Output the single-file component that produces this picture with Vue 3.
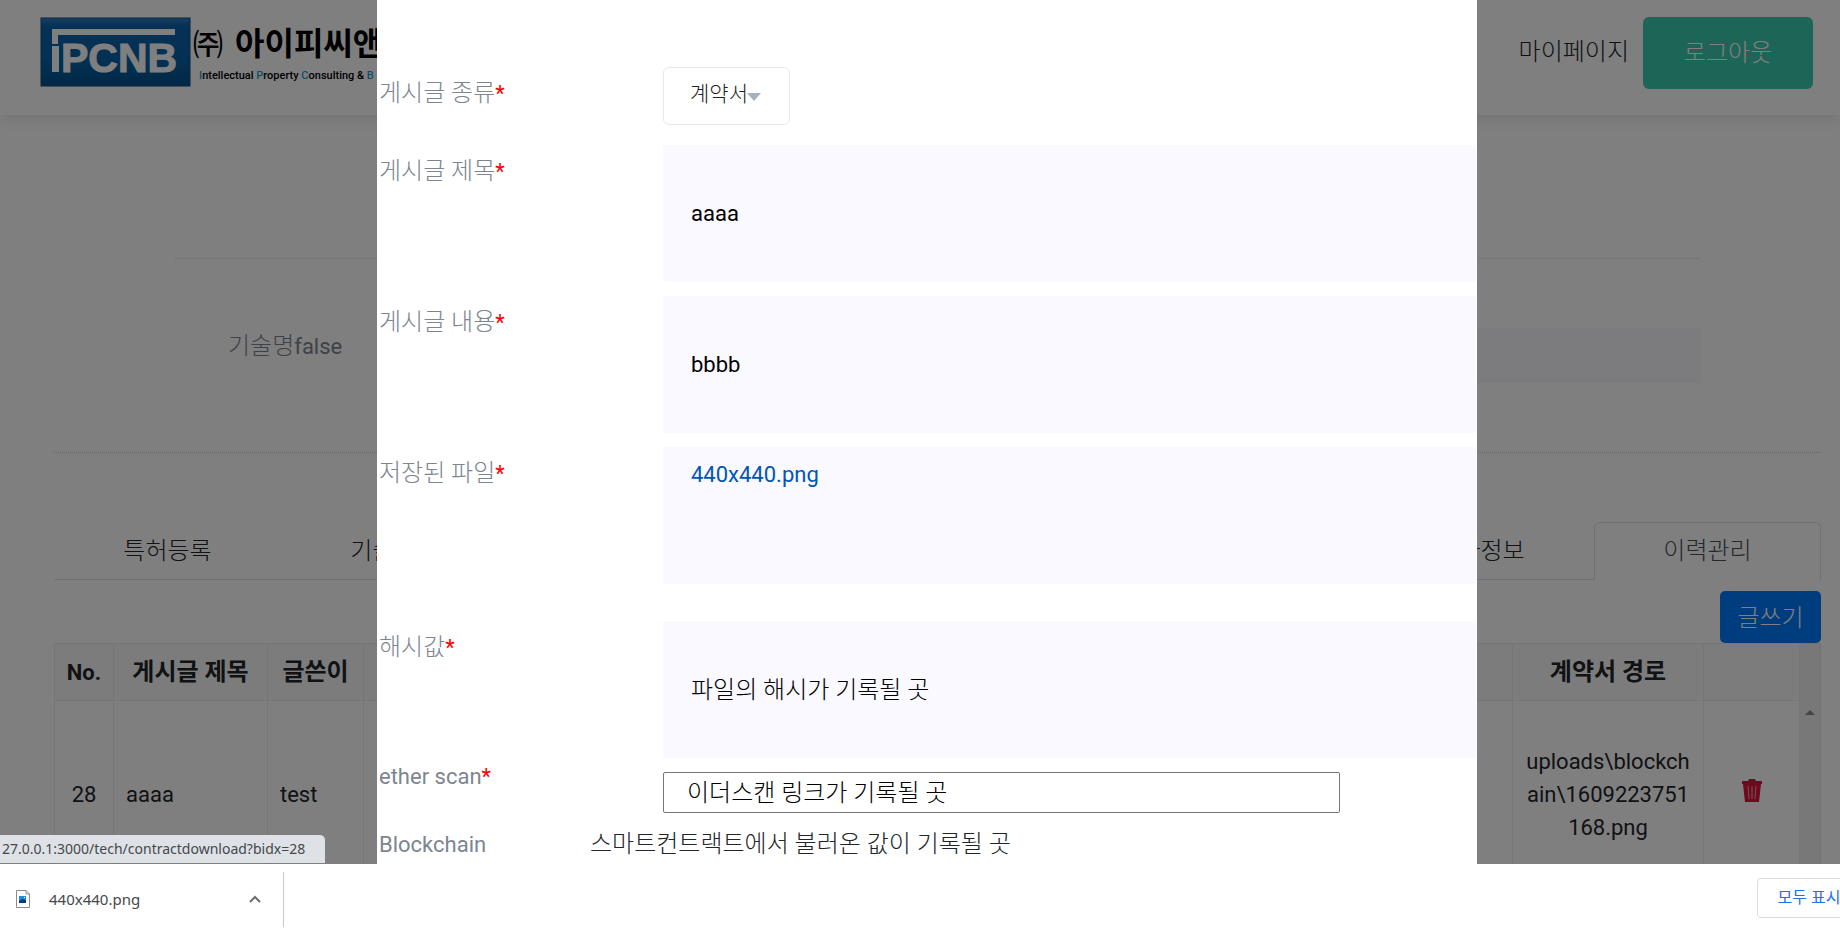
<template>
  <div class="window">
    <div class="viewport">
      <div class="page">
        <header class="header">
          <a class="logo" href="#">
            <svg width="152" height="71" viewBox="0 0 152 71" aria-hidden="true">
              <defs>
                <linearGradient id="logoBg" x1="0" y1="0" x2="0" y2="1">
                  <stop offset="0" stop-color="#2f7fc4" />
                  <stop offset="0.12" stop-color="#0a62ac" />
                  <stop offset="0.6" stop-color="#0663a8" />
                  <stop offset="1" stop-color="#04508c" />
                </linearGradient>
              </defs>
              <rect x="1" y="1" width="149" height="68" fill="url(#logoBg)" stroke="#0d4a80" />
              <path d="M12 12h123v6H18v9h-6z" fill="#fff" />
              <path d="M12 29h7v26h-7z" fill="#fff" />
              <text class="logo-mark" x="21" y="55">PCNB</text>
            </svg>
            <span class="logo-text">
              <span class="logo-name"><small>㈜</small>아이피씨앤</span>
              <span class="logo-sub"><i>I</i>ntellectual <i>P</i>roperty <i>C</i>onsulting &amp; <i>B</i></span>
            </span>
          </a>
          <nav class="user-nav">
            <a class="ko mypage" href="#">마이페이지</a>
            <button class="ko logout" type="button">로그아웃</button>
          </nav>
        </header>

        <main class="content">
          <section class="tech">
            <label for="tech-name"><span class="ko">기술명</span>false</label>
            <input id="tech-name" type="text" readonly>
          </section>

          <nav class="tabs">
            <a
              v-for="tab in tabs"
              :key="tab.name"
              href="#"
              :class="['ko', 'tab', tab.side, { active: tab.active }]"
            >{{ tab.name }}</a>
          </nav>

          <div class="toolbar">
            <button class="ko write" type="button">글쓰기</button>
          </div>

          <table class="history">
            <colgroup>
              <col class="c-no">
              <col class="c-title">
              <col class="c-writer">
              <col>
              <col class="c-path">
              <col class="c-del">
              <col class="c-scroll">
            </colgroup>
            <thead>
              <tr>
                <th>No.</th>
                <th class="ko">게시글 제목</th>
                <th class="ko">글쓴이</th>
                <th></th>
                <th class="ko">계약서 경로</th>
                <th></th>
                <th class="gutter"></th>
              </tr>
            </thead>
            <tbody>
              <tr v-for="row in rows" :key="row.no">
                <td class="center">{{ row.no }}</td>
                <td>{{ row.title }}</td>
                <td>{{ row.writer }}</td>
                <td></td>
                <td class="center path">{{ row.path }}</td>
                <td class="center">
                  <button class="trash" type="button" aria-label="삭제">
                    <svg width="20" height="23" viewBox="0 0 20 23">
                      <path d="M0 2h6l1-2h6l1 2h6v3H0z" fill="#dc143c" />
                      <path d="M1 5h18l-2 18H3z" fill="#dc143c" />
                      <path d="M6 7l1 13M10 7v13M14 7l-1 13" stroke="#fff" stroke-opacity="0.6" fill="none" />
                    </svg>
                  </button>
                </td>
                <td class="gutter">
                  <svg width="10" height="5" viewBox="0 0 10 5"><path d="M0 5l5-5 5 5z" fill="#8a8a8a" /></svg>
                </td>
              </tr>
            </tbody>
          </table>
        </main>
      </div>

      <div class="overlay">
        <form class="modal" @submit.prevent>
          <div class="row kind">
            <label for="kind"><span class="ko">게시글 종류</span><em>*</em></label>
            <div class="select">
              <select id="kind" v-model="kind">
                <option>계약서</option>
              </select>
              <svg class="caret" width="14" height="8" viewBox="0 0 14 8"><path d="M0 0h14L7 8z" fill="#a9b1bb" /></svg>
            </div>
          </div>
          <div class="row">
            <label for="title"><span class="ko">게시글 제목</span><em>*</em></label>
            <input id="title" v-model="title" class="box" type="text">
          </div>
          <div class="row">
            <label for="body"><span class="ko">게시글 내용</span><em>*</em></label>
            <input id="body" v-model="body" class="box" type="text">
          </div>
          <div class="row file">
            <span class="label"><span class="ko">저장된 파일</span><em>*</em></span>
            <div class="box"><a href="#">440x440.png</a></div>
          </div>
          <div class="row">
            <label for="hash"><span class="ko">해시값</span><em>*</em></label>
            <input id="hash" v-model="hash" class="box ko" type="text">
          </div>
          <div class="row ether">
            <label for="ether">ether scan<em>*</em></label>
            <input id="ether" v-model="ether" class="ko line" type="text">
          </div>
          <div class="row chain">
            <span class="label">Blockchain</span>
            <span class="ko">스마트컨트랙트에서 불러온 값이 기록될 곳</span>
          </div>
        </form>
      </div>

      <div class="status">27.0.0.1:3000/tech/contractdownload?bidx=28</div>
    </div>

    <footer class="shelf">
      <div class="download">
        <svg width="14" height="18" viewBox="0 0 14 18">
          <path d="M.5.5h9.500l3.500 3.500v13.500H.5z" fill="#fff" stroke="#8c8c8c" />
          <path d="M10 .5V4h3.500" fill="none" stroke="#8c8c8c" />
          <path d="M3 6h7v7H3z" fill="#1f8be0" />
          <path d="M3 11l3-2 4 1v3H3z" fill="#0b3a80" />
          <path d="M8 7h1v1H8z" fill="#fff" />
        </svg>
        <span class="name">440x440.png</span>
        <button type="button" aria-label="메뉴">
          <svg width="12" height="8" viewBox="0 0 12 8"><path d="M1 7l5-5 5 5" fill="none" stroke="#6b6e72" stroke-width="2" /></svg>
        </button>
      </div>
      <button class="show-all" type="button">모두 표시</button>
    </footer>
  </div>
</template>

<script setup>
import { ref } from 'vue'

const tabs = [
  { name: '특허등록' },
  { name: '기술정보' },
  { name: '평가정보', side: 'right' },
  { name: '이력관리', active: true },
]

const rows = [
  { no: 28, title: 'aaaa', writer: 'test', path: 'uploads\\blockchain\\1609223751168.png' },
]

const kind = ref('계약서')
const title = ref('aaaa')
const body = ref('bbbb')
const hash = ref('파일의 해시가 기록될 곳')
const ether = ref('이더스캔 링크가 기록될 곳')
</script>

<style>
body {
  margin: 0;
}
</style>

<style scoped>
* {
  box-sizing: border-box;
}

.window {
  display: flex;
  flex-direction: column;
  height: 100vh;
  overflow: hidden;
  background: #fff;
  color: #212529;
  font-family: Roboto, "Noto Sans CJK KR", sans-serif;
  font-size: 22px;
  line-height: 33px;
}

button,
input,
select {
  font-family: inherit;
  font-size: inherit;
  margin: 0;
}

a {
  color: inherit;
  text-decoration: none;
}

.ko {
  font-size: 24px;
  font-weight: 300;
}

.viewport {
  position: relative;
  flex: 1;
  min-height: 0;
  overflow: hidden;
}

/* header */
.header {
  display: flex;
  justify-content: space-between;
  align-items: flex-start;
  height: 115px;
  padding: 17px 27px 0 40px;
  box-shadow: 0 4px 16px rgba(0, 0, 0, 0.1);
}

.logo {
  display: flex;
  white-space: nowrap;
}

.logo-mark {
  font: bold 41px "Liberation Sans", sans-serif;
  fill: #fff;
  stroke: #fff;
}

.logo-text {
  display: flex;
  flex-direction: column;
  padding: 6px 0 0 1px;
  color: #000;
}

.logo-name {
  font-size: 32px;
  font-weight: 700;
  line-height: 42px;
}

.logo-name small {
  margin-right: 12px;
  font-size: 30px;
  font-weight: 500;
}

.logo-sub {
  padding-left: 6px;
  font: 500 11px/20px Roboto, sans-serif;
}

.logo-sub i {
  color: #1d9fd0;
  font-style: normal;
}

.user-nav {
  display: flex;
  gap: 14px;
}

.mypage {
  line-height: 70px;
}

.logout {
  width: 170px;
  height: 72px;
  padding: 0 0 6px;
  border: 0;
  border-radius: 6px;
  background: #3acaac;
  color: #fff;
}

/* content */
.content {
  padding: 143px 19px 0 54px;
}

.tech {
  display: grid;
  grid-template-columns: 360px 1fr;
  margin: 0 120px 0 121px;
  padding: 69px 0;
  border-top: 1px dotted #ddd;
  color: #7d8590;
}

.tech label {
  padding: 2px 0 0 53px;
}

.tech input {
  height: 55px;
  border: 0;
  background: #f9f9ff;
}

.tabs {
  display: flex;
  margin-bottom: 11px;
  padding-top: 69px;
  border-top: 1px dotted #ccc;
  box-shadow: inset 0 -1px #dee2e6;
}

.tab {
  width: 227px;
  height: 58px;
  border: 1px solid transparent;
  border-bottom: 0;
  line-height: 56px;
  text-align: center;
}

.tab.right {
  margin-left: auto;
}

.tab.active {
  border-color: #dee2e6;
  border-radius: 6px 6px 0 0;
  background: #fff;
  color: #495057;
}

.toolbar {
  display: flex;
  justify-content: flex-end;
}

.write {
  width: 101px;
  height: 52px;
  padding: 0 0 4px;
  border: 0;
  border-radius: 5px;
  background: #007bff;
  color: #fff;
}

.history {
  width: 100%;
  table-layout: fixed;
  border-collapse: collapse;
  border: 1px solid #e6e6e6;
}

.c-no { width: 59px; }
.c-title { width: 154px; }
.c-writer { width: 96px; }
.c-path { width: 191px; }
.c-del { width: 96px; }
.c-scroll { width: 21px; }

.history th {
  height: 57px;
  padding: 0;
  border: 1px solid #ececec;
  background: #f9f9f9;
  font-weight: 700;
}

.history td {
  height: 188px;
  padding: 0 12px;
  border: 1px solid #ececec;
}

.history .center {
  text-align: center;
}

.history td:first-child {
  padding: 0;
}

.path {
  word-break: break-all;
}

.history .gutter {
  padding: 0;
  border: 0;
  background: #f1f1f1;
  line-height: 10px;
  text-align: center;
  vertical-align: top;
}

.gutter svg {
  margin-top: 9px;
}

.trash {
  padding: 0;
  border: 0;
  background: none;
  line-height: 0;
}

/* modal */
.overlay {
  position: absolute;
  inset: 0;
  display: flex;
  justify-content: center;
  padding-left: 14px;
  background: rgba(0, 0, 0, 0.5);
}

.modal {
  width: 1100px;
  padding: 67px 1px 0 2px;
  background: #fff;
}

.row {
  display: grid;
  grid-template-columns: 284px 1fr;
  align-items: start;
  margin-bottom: 14px;
}

.row label,
.row .label {
  color: #7d8590;
  line-height: 52px;
}

.row em {
  color: #f00;
  font-style: normal;
}

.kind {
  margin-bottom: 20px;
}

.select {
  position: relative;
  width: 127px;
}

.select select {
  display: block;
  width: 100%;
  height: 58px;
  padding: 0 24px 4px 26px;
  border: 1px solid #e8e8e8;
  border-radius: 6px;
  appearance: none;
  background: #fff;
  color: #222;
  font-size: 21px;
  font-weight: 300;
}

.caret {
  position: absolute;
  top: 26px;
  right: 29px;
  pointer-events: none;
}

.box {
  width: 100%;
  height: 137px;
  padding: 0 28px;
  border: 0;
  background: #f9f9ff;
  color: #000;
}

.box.ko {
  padding-bottom: 4px;
}

.file {
  margin-bottom: 37px;
}

.file .box {
  padding-top: 11px;
}

.file a {
  color: #0056b3;
}

.ether {
  margin: -14px 0 13px;
}

.row.ether label,
.row.chain span {
  line-height: 37px;
}

.line {
  width: 677px;
  height: 41px;
  margin-top: 14px;
  padding: 0 23px 4px;
  border: 1px solid #767676;
  border-radius: 2px;
  color: #000;
}

.chain {
  grid-template-columns: 211px 1fr;
}

/* browser chrome */
.status {
  position: absolute;
  left: 0;
  bottom: 1px;
  width: 325px;
  height: 28px;
  padding-left: 2px;
  border-radius: 0 5px 0 0;
  background: #dee1e6;
  color: #45484c;
  font: 14px/28px "Noto Sans", sans-serif;
  white-space: nowrap;
}

.shelf {
  display: flex;
  align-items: flex-start;
  justify-content: space-between;
  height: 65px;
  padding-top: 8px;
  overflow: hidden;
}

.download {
  display: flex;
  align-items: center;
  width: 284px;
  height: 55px;
  padding: 0 22px 2px 16px;
  border-right: 1px solid #c8c8c8;
}

.download .name {
  flex: 1;
  padding-left: 19px;
  color: #45484c;
  font: 15px/24px "Noto Sans", sans-serif;
}

.download button {
  padding: 0;
  border: 0;
  background: none;
  line-height: 0;
}

.show-all {
  width: 104px;
  height: 40px;
  margin: 6px -21px 0 0;
  padding: 0 0 4px;
  border: 1px solid #dadce0;
  border-radius: 4px;
  background: #fff;
  color: #1a73e8;
  font-size: 16px;
  white-space: nowrap;
}
</style>
